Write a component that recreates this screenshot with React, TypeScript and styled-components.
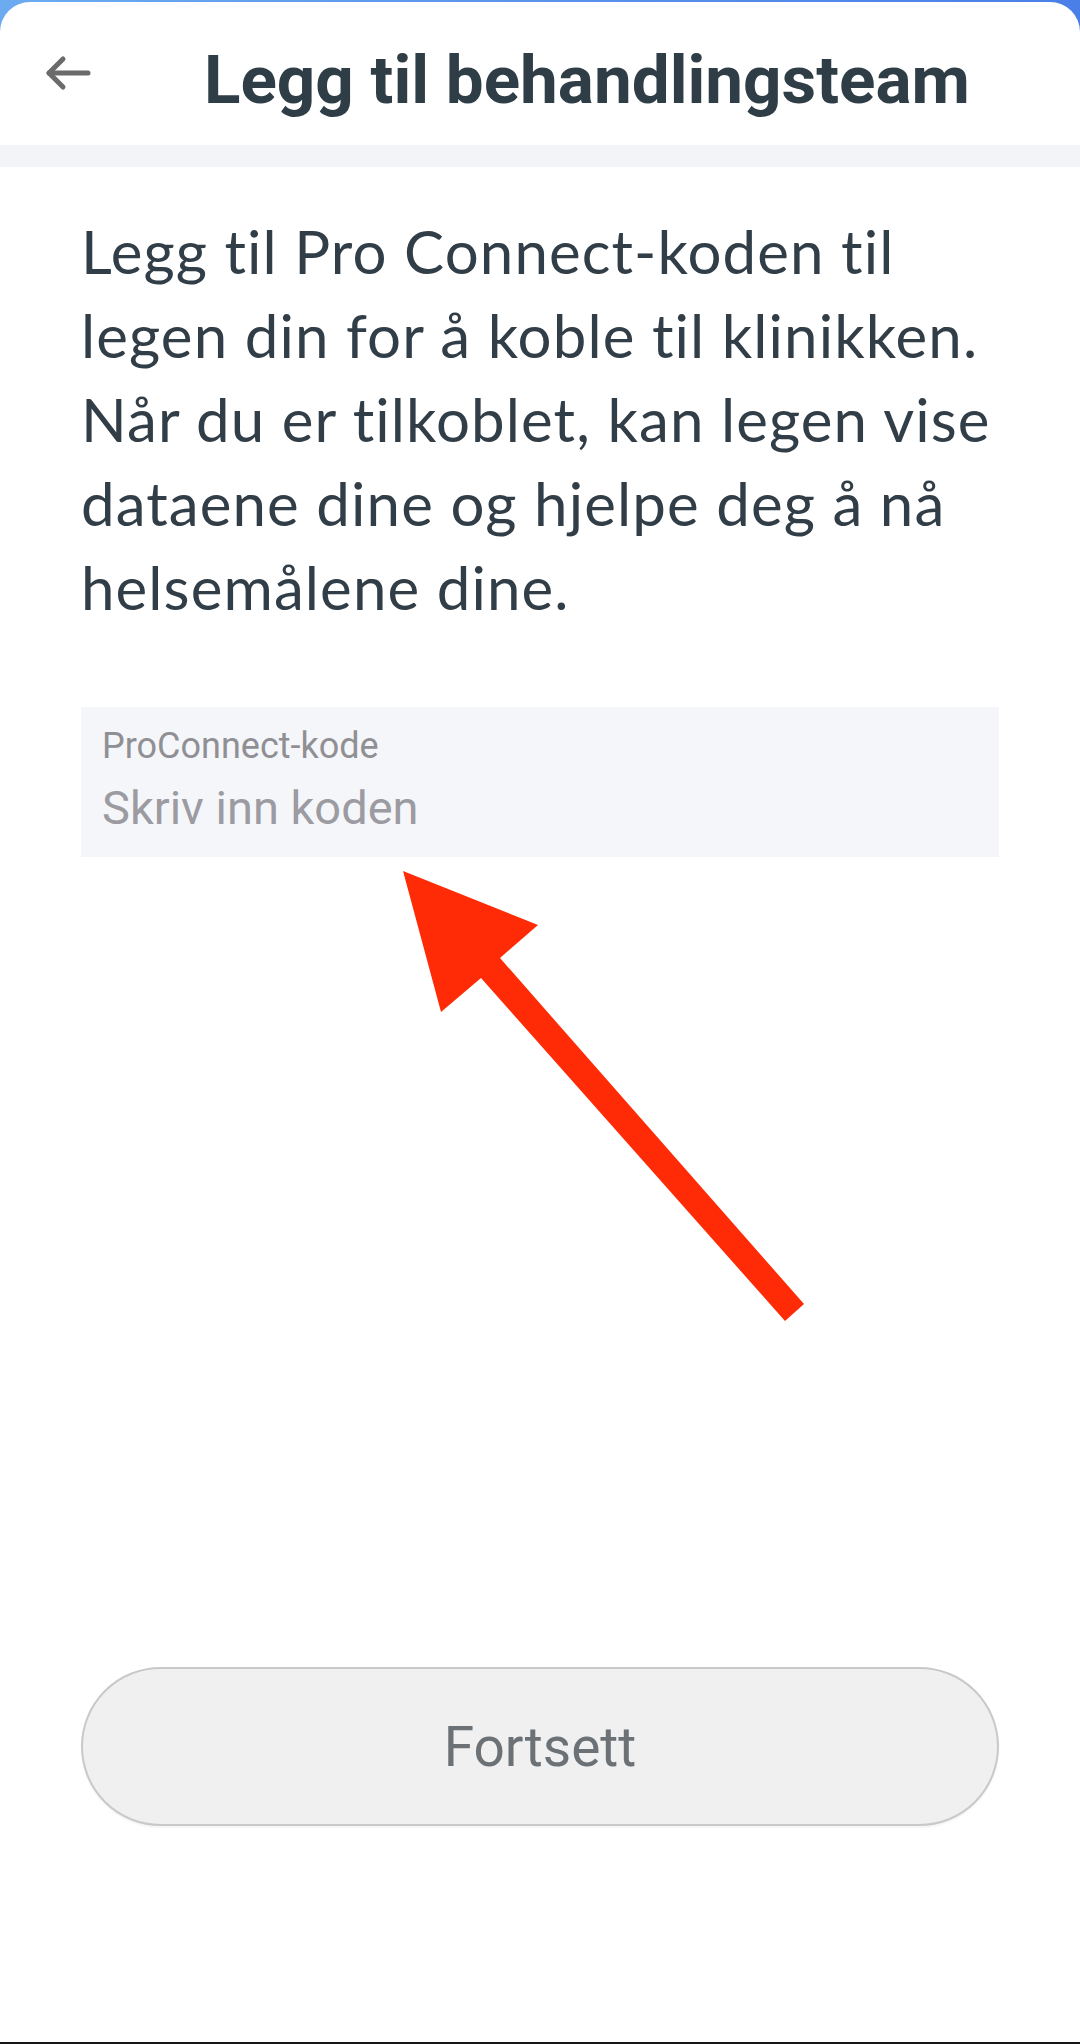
import React from "react";
import styled, { createGlobalStyle } from "styled-components";

const GlobalStyle = createGlobalStyle`
  html, body {
    margin: 0;
    padding: 0;
  }
  body {
    width: 1080px;
    background: linear-gradient(90deg, #6cabf0 0%, #5a92ec 50%, #4a7fe8 100%);
    font-family: Roboto, "Noto Sans", sans-serif;
  }
  * { box-sizing: border-box; }
`;

const Screen = styled.div`
  width: 1080px;
  height: 2044px;
  padding-top: 2px;
  display: flex;
  flex-direction: column;
`;

const Panel = styled.div`
  position: relative;
  flex: 1;
  background: #ffffff;
  border-radius: 30px 30px 0 0;
  border-bottom: 2px solid #141414;
  display: flex;
  flex-direction: column;
  overflow: hidden;
`;

const Header = styled.header`
  height: 143px;
  display: flex;
  align-items: center;
  padding: 12px 0 0 40px;
`;

const BackIcon = styled.svg`
  width: 52px;
  height: 40px;
  margin-bottom: 13px;
  flex: none;
`;

const Title = styled.h1`
  margin: 0 0 0 112px;
  font-family: Roboto, sans-serif;
  font-weight: 700;
  font-size: 67.4px;
  line-height: 1.172;
  color: #2f3d46;
  white-space: nowrap;
`;

const Band = styled.div`
  height: 22px;
  background: #f3f4f7;
`;

const Content = styled.main`
  display: flex;
  flex-direction: column;
  padding: 42px 81px 0 81px;
`;

const Description = styled.p`
  margin: 0;
  font-family: Lato, "Open Sans", sans-serif;
  font-size: 60px;
  line-height: 84px;
  letter-spacing: 1.1px;
  color: #323e47;
`;

const Field = styled.label`
  margin-top: 78px;
  height: 150px;
  background: #f5f6fa;
  display: flex;
  flex-direction: column;
  padding: 18px 21px 0 21px;
`;

const FieldLabel = styled.span`
  font-family: Roboto, sans-serif;
  font-size: 36px;
  line-height: 43px;
  color: #8f8f94;
`;

const FieldInput = styled.input`
  margin-top: 12px;
  border: none;
  outline: none;
  background: transparent;
  padding: 0;
  font-family: Roboto, sans-serif;
  font-size: 47px;
  line-height: 56px;
  height: 56px;
  color: #333;
  &::placeholder {
    color: #9b9ba1;
  }
`;

const ContinueButton = styled.button`
  margin-top: 810px;
  height: 159px;
  width: 100%;
  border-radius: 80px;
  border: 2px solid #c9c9c9;
  background: #f0f0f0;
  box-shadow: 0 2px 2px rgba(0, 0, 0, 0.04);
  display: flex;
  align-items: center;
  justify-content: center;
  font-family: Roboto, sans-serif;
  font-size: 55px;
  color: #6c7176;
  padding: 0;
`;

const Annotation = styled.svg`
  position: absolute;
  left: 0;
  top: 0;
  width: 1080px;
  height: 2042px;
  pointer-events: none;
`;

export default function App() {
  return (
    <>
      <GlobalStyle />
      <Screen>
        <Panel>
          <Header>
            <BackIcon viewBox="0 0 52 40" aria-label="Tilbake">
              <g
                fill="none"
                stroke="#6b6b6b"
                strokeWidth="5"
                strokeLinecap="round"
                strokeLinejoin="round"
              >
                <line x1="9" y1="20" x2="48" y2="20" />
                <polyline points="23,6 9,20 23,34" />
              </g>
            </BackIcon>
            <Title>Legg til behandlingsteam</Title>
          </Header>
          <Band />
          <Content>
            <Description>
              Legg til Pro Connect-koden til legen din for å koble til klinikken.
              Når du er tilkoblet, kan legen vise dataene dine og hjelpe deg å nå
              helsemålene dine.
            </Description>
            <Field>
              <FieldLabel>ProConnect-kode</FieldLabel>
              <FieldInput placeholder="Skriv inn koden" />
            </Field>
            <ContinueButton>Fortsett</ContinueButton>
          </Content>
          <Annotation viewBox="0 0 1080 2042">
            <polygon
              fill="#ff2b06"
              points="403,869 538,923 500,956 804,1302 785,1319 481,976 441,1010"
            />
          </Annotation>
        </Panel>
      </Screen>
    </>
  );
}
